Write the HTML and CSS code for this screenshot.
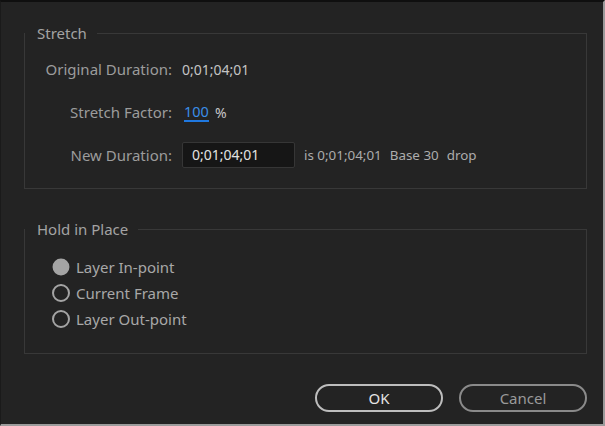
FILE: index.html
```html
<!DOCTYPE html>
<html>
<head>
<meta charset="utf-8">
<link rel="stylesheet" href="styles.css">
</head>
<body>
<div class="dialog">
  <fieldset class="group stretch">
    <legend class="legend">Stretch</legend>
    <div class="grid">
      <div class="label">Original Duration:</div>
      <div class="value">0;01;04;01</div>
      <div class="label">Stretch Factor:</div>
      <div class="value"><span class="link">100</span><span class="pct">%</span></div>
      <div class="label">New Duration:</div>
      <div class="value">
        <div class="input">0;01;04;01</div>
        <span class="info">is 0;01;04;01</span><span class="info gap">Base 30</span><span class="info gap">drop</span>
      </div>
    </div>
  </fieldset>
  <fieldset class="group hold">
    <legend class="legend">Hold in Place</legend>
    <div class="radios">
      <div class="radio"><span class="dot on"></span><span class="rlabel">Layer In-point</span></div>
      <div class="radio"><span class="dot"></span><span class="rlabel">Current Frame</span></div>
      <div class="radio"><span class="dot"></span><span class="rlabel">Layer Out-point</span></div>
    </div>
  </fieldset>
  <div class="buttons">
    <div class="btn ok">OK</div>
    <div class="btn cancel">Cancel</div>
  </div>
</div>
</body>
</html>
```
FILE: styles.css
```css
html, body {
  margin: 0;
  padding: 0;
  background: #232323;
}
body {
  font-family: "Noto Sans", "Open Sans", sans-serif;
  font-size: 15px;
  color: #a0a0a0;
}
.dialog {
  box-sizing: border-box;
  width: 605px;
  height: 426px;
  background: #232323;
  border-top: 2px solid #0f0f0f;
  border-left: 1px solid #1a1a1a;
  border-right: 2px solid #9a9a9a;
  border-bottom: 2px solid #9c9c9c;
  padding: 22px 16px 0 23px;
  display: flex;
  flex-direction: column;
}
.group {
  margin: 0;
  border: 1px solid #383838;
  padding: 0;
  min-width: 0;
}
.legend {
  padding: 0 10px 0 12px;
  line-height: 18px;
  color: #a3a3a3;
}
.stretch {
  padding-top: 14px;
  padding-bottom: 20px;
}
.grid {
  display: grid;
  grid-template-columns: 147px auto;
  grid-auto-rows: 26px;
  column-gap: 10px;
  row-gap: 17px;
  align-items: center;
}
.label {
  text-align: right;
  color: #9c9c9c;
  white-space: nowrap;
}
.value {
  display: flex;
  align-items: center;
  font-size: 14px;
  color: #c4c4c4;
  white-space: nowrap;
}
.link {
  color: #3a8ee8;
  border-bottom: 2px solid #1f78e0;
  line-height: 17px;
  margin-left: 2px;
  font-size: 14.5px;
}
.pct {
  margin-left: 6px;
  color: #c8c8c8;
}
.input {
  box-sizing: border-box;
  width: 113px;
  height: 26px;
  line-height: 24px;
  background: #161616;
  border: 1px solid #363636;
  border-radius: 2px;
  padding-left: 9px;
  color: #e2e2e2;
}
.info {
  font-size: 13.4px;
  color: #acacac;
  margin-left: 9px;
}
.info.gap {
  margin-left: 8px;
}
.hold {
  margin-top: 31px;
  padding-top: 16px;
  padding-bottom: 21px;
}
.radios {
  display: flex;
  flex-direction: column;
  padding-left: 27px;
}
.radio {
  display: flex;
  align-items: center;
  height: 26px;
}
.dot {
  box-sizing: border-box;
  width: 18px;
  height: 18px;
  border-radius: 50%;
  border: 2.5px solid #a4a4a4;
}
.dot.on {
  background: #a4a4a4;
  border-color: #a4a4a4;
  transform: scale(0.94);
}
.rlabel {
  margin-left: 6px;
  color: #a8a8a8;
}
.buttons {
  display: flex;
  justify-content: flex-end;
  gap: 16px;
  margin-top: 30px;
}
.btn {
  box-sizing: border-box;
  width: 128px;
  height: 28px;
  border-radius: 14px;
  display: flex;
  align-items: center;
  justify-content: center;
  font-size: 15px;
}
.ok {
  border: 2px solid #bdbdbd;
  color: #e4e4e4;
}
.cancel {
  border: 2px solid #8a8a8a;
  color: #9a9a9a;
}
```
